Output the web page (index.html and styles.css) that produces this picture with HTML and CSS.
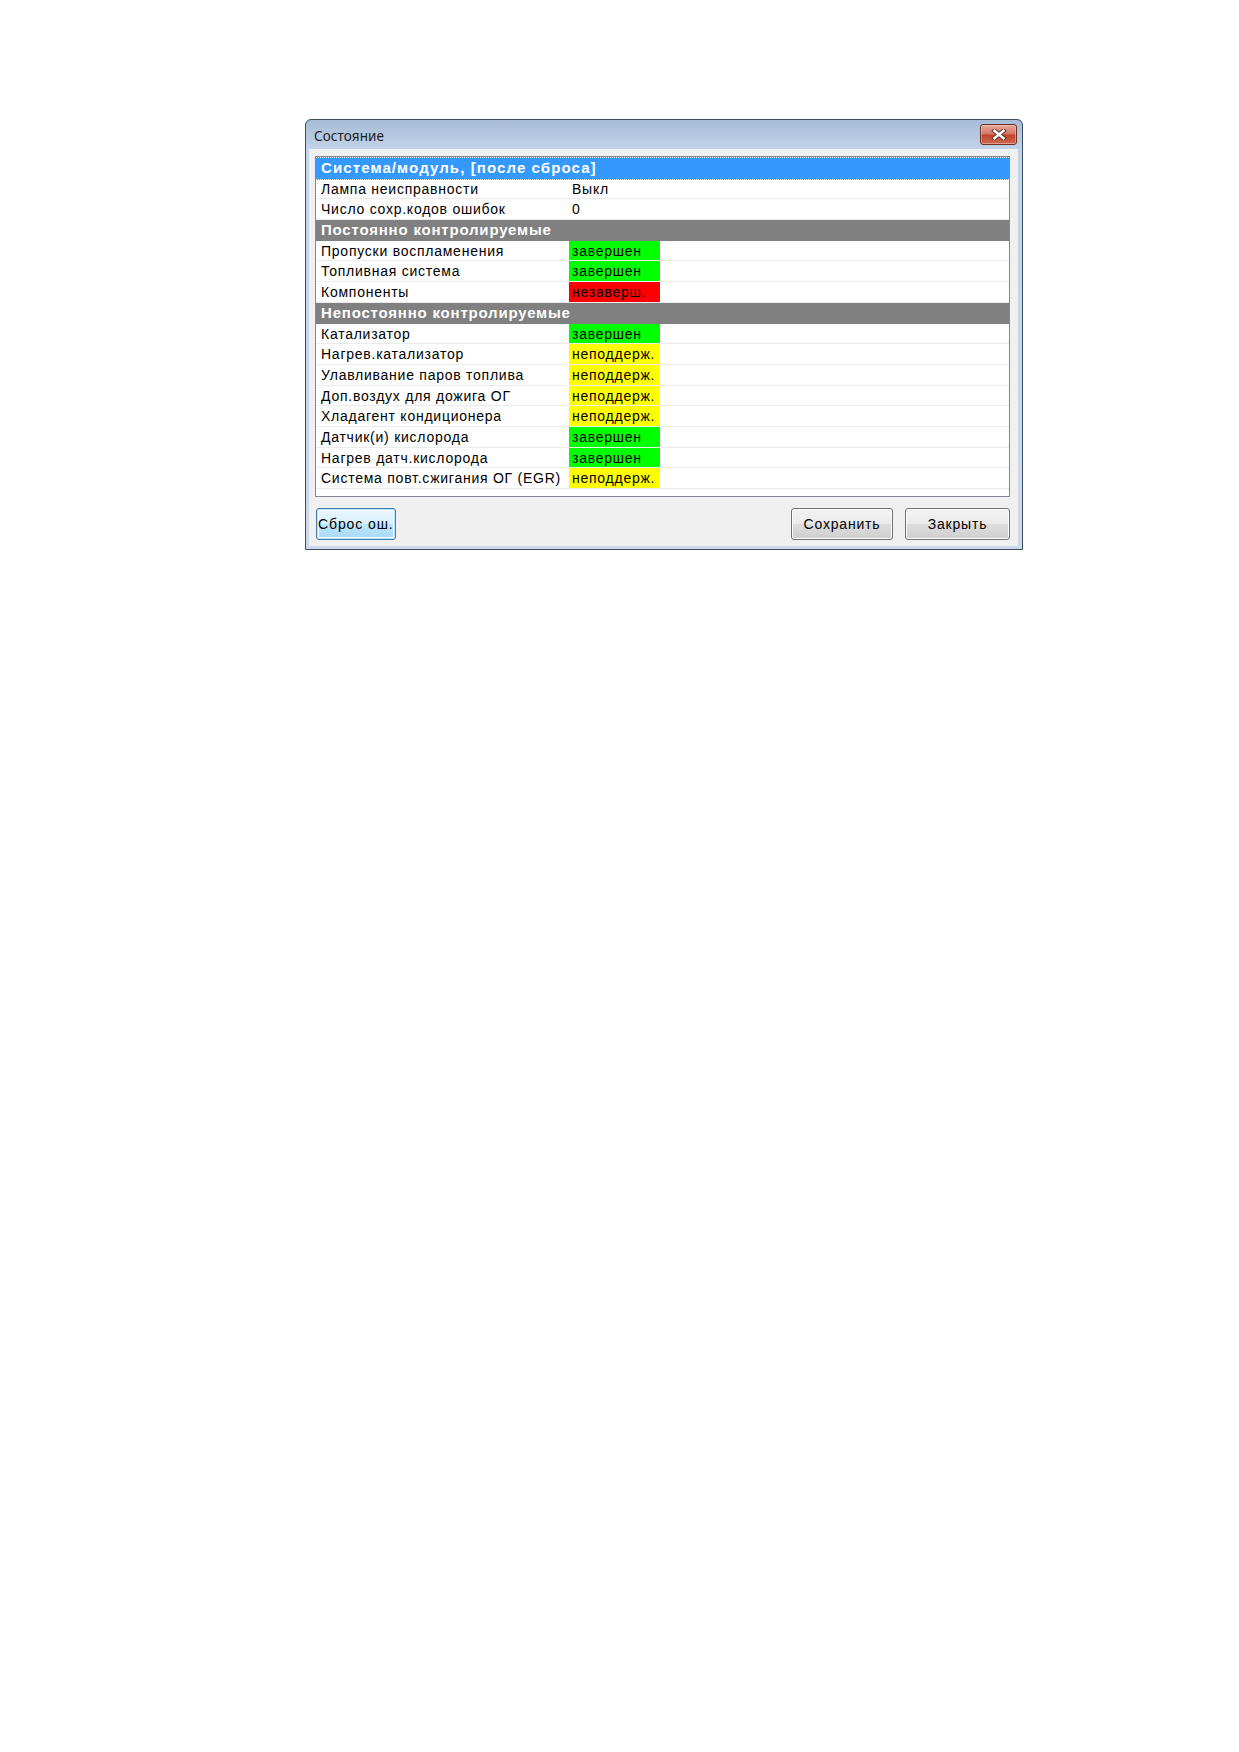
FILE: index.html
```html
<!DOCTYPE html>
<html lang="ru">
<head>
<meta charset="utf-8">
<title>Состояние</title>
<link rel="stylesheet" href="styles.css">
</head>
<body>
<div class="dialog">
  <div class="titlebar">
    <span class="title">Состояние</span>
    <span class="close">
      <svg width="16" height="11" viewBox="0 0 16 11">
        <path d="M3.5 1.8 L12.5 9.2 M12.5 1.8 L3.5 9.2" stroke="#5a2a22" stroke-width="4.4" stroke-linecap="square" fill="none"/>
        <path d="M3.5 1.8 L12.5 9.2 M12.5 1.8 L3.5 9.2" stroke="#ffffff" stroke-width="2.6" stroke-linecap="square" fill="none"/>
      </svg>
    </span>
  </div>
  <div class="client">
    <div class="list">
      <div class="row head blue focus"><span class="htext">Система/модуль, [после сброса]</span></div>
      <div class="row"><span class="name">Лампа неисправности</span><span class="val">Выкл</span></div>
      <div class="row"><span class="name">Число сохр.кодов ошибок</span><span class="val">0</span></div>
      <div class="row head grey"><span class="htext">Постоянно контролируемые</span></div>
      <div class="row"><span class="name">Пропуски воспламенения</span><span class="val ok">завершен</span></div>
      <div class="row"><span class="name">Топливная система</span><span class="val ok">завершен</span></div>
      <div class="row"><span class="name">Компоненты</span><span class="val bad">незаверш.</span></div>
      <div class="row head grey"><span class="htext">Непостоянно контролируемые</span></div>
      <div class="row"><span class="name">Катализатор</span><span class="val ok">завершен</span></div>
      <div class="row"><span class="name">Нагрев.катализатор</span><span class="val na">неподдерж.</span></div>
      <div class="row"><span class="name">Улавливание паров топлива</span><span class="val na">неподдерж.</span></div>
      <div class="row"><span class="name">Доп.воздух для дожига ОГ</span><span class="val na">неподдерж.</span></div>
      <div class="row"><span class="name">Хладагент кондиционера</span><span class="val na">неподдерж.</span></div>
      <div class="row"><span class="name">Датчик(и) кислорода</span><span class="val ok">завершен</span></div>
      <div class="row"><span class="name">Нагрев датч.кислорода</span><span class="val ok">завершен</span></div>
      <div class="row"><span class="name">Система повт.сжигания ОГ (EGR)</span><span class="val na">неподдерж.</span></div>
    </div>
    <div class="buttons">
      <button class="btn btn-focus">Сброс ош.</button>
      <span class="spacer"></span>
      <button class="btn btn-save">Сохранить</button>
      <button class="btn btn-close">Закрыть</button>
    </div>
  </div>
</div>
</body>
</html>
```
FILE: styles.css
```css
html, body {
  margin: 0;
  padding: 0;
  background: #ffffff;
}

body {
  font-family: "Liberation Sans", Arial, sans-serif;
}

/* window frame */
.dialog {
  margin: 119px 0 0 305px;
  width: 718px;
  height: 431px;
  box-sizing: border-box;
  border: 1px solid #3b4c63;
  border-radius: 6px 6px 0 0;
  background: linear-gradient(#a6bcd8, #c3d3e8 30px, #cbd9eb);
  padding: 0 4px 3px 3px;
  display: flex;
  flex-direction: column;
}

.titlebar {
  height: 29px;
  display: flex;
  align-items: flex-start;
  justify-content: space-between;
  padding-left: 5px;
  padding-right: 1px;
}

.title {
  font-family: "Noto Sans", "Open Sans", sans-serif;
  font-size: 13.5px;
  color: #1c1c1c;
  margin-top: 7px;
  letter-spacing: 0.1px;
}

.close {
  margin-top: 4px;
  width: 37px;
  height: 21px;
  box-sizing: border-box;
  border: 1px solid #6e2e24;
  border-radius: 3px;
  background: linear-gradient(#e5a897, #d47a66 45%, #c2432d 55%, #cd6a50);
  box-shadow: inset 0 0 0 1px rgba(255, 220, 210, 0.45);
  display: flex;
  align-items: center;
  justify-content: center;
}

.close svg {
  display: block;
}

/* client area */
.client {
  flex: 1;
  background: #f0f0f0;
  padding: 7px 8px 6px 6px;
  display: flex;
  flex-direction: column;
}

.list {
  height: 341px;
  box-sizing: border-box;
  border: 1px solid #828790;
  padding-top: 1px;
  background: #ffffff;
  display: flex;
  flex-direction: column;
}

.row {
  height: 19.7px;
  border-bottom: 1px solid #ebebeb;
  display: flex;
  align-items: stretch;
  font-size: 14px;
  letter-spacing: 0.75px;
  color: #000000;
  white-space: nowrap;
  flex: none;
}

.row .name {
  width: 247px;
  padding-left: 5px;
  line-height: 21px;
  overflow: hidden;
}

.row .val {
  width: 88px;
  padding-left: 3px;
  line-height: 21px;
  margin-left: 1px;
}

.val.ok { background: #00ff00; }
.val.bad { background: #ff0000; }
.val.na { background: #ffff00; }

.head {
  border-bottom-color: transparent;
  color: #ffffff;
  font-weight: bold;
  font-size: 15px;
  letter-spacing: 1.1px;
}

.head .htext {
  padding-left: 5px;
  line-height: 20.5px;
}

.head.blue { background: #3399ff; }
.head.grey {
  background: #808080;
  border-bottom: 1px solid #808080;
  letter-spacing: 0.8px;
}

.focus {
  outline: 1px dotted #b7773e;
  outline-offset: 0;
}

/* button row */
.buttons {
  margin-top: 11px;
  display: flex;
  gap: 12px;
  align-items: flex-start;
}

.spacer {
  flex: 1;
}

.btn {
  height: 32px;
  box-sizing: border-box;
  border: 1px solid #707070;
  border-radius: 3px;
  background: linear-gradient(#f2f2f2, #ebebeb 50%, #dddddd 50%, #cfcfcf);
  box-shadow: inset 0 0 0 1px #fcfcfc;
  font-family: "Liberation Sans", Arial, sans-serif;
  font-size: 14px;
  letter-spacing: 0.8px;
  color: #000000;
  padding: 0;
  margin: 0;
  white-space: nowrap;
}

.btn-focus {
  width: 80px;
  margin-left: 1px;
  border-color: #3c7fb1;
  background: linear-gradient(#eaf6fd, #d9f0fc 50%, #bee6fd 50%, #a7d9f5);
  box-shadow: inset 0 0 0 1px #b6e0f7, inset 0 0 0 2px #ffffff;
  text-align: left;
  padding-left: 1px;
  letter-spacing: 0.9px;
  overflow: visible;
}

.btn-save {
  width: 102px;
}

.btn-close {
  width: 105px;
}
```
